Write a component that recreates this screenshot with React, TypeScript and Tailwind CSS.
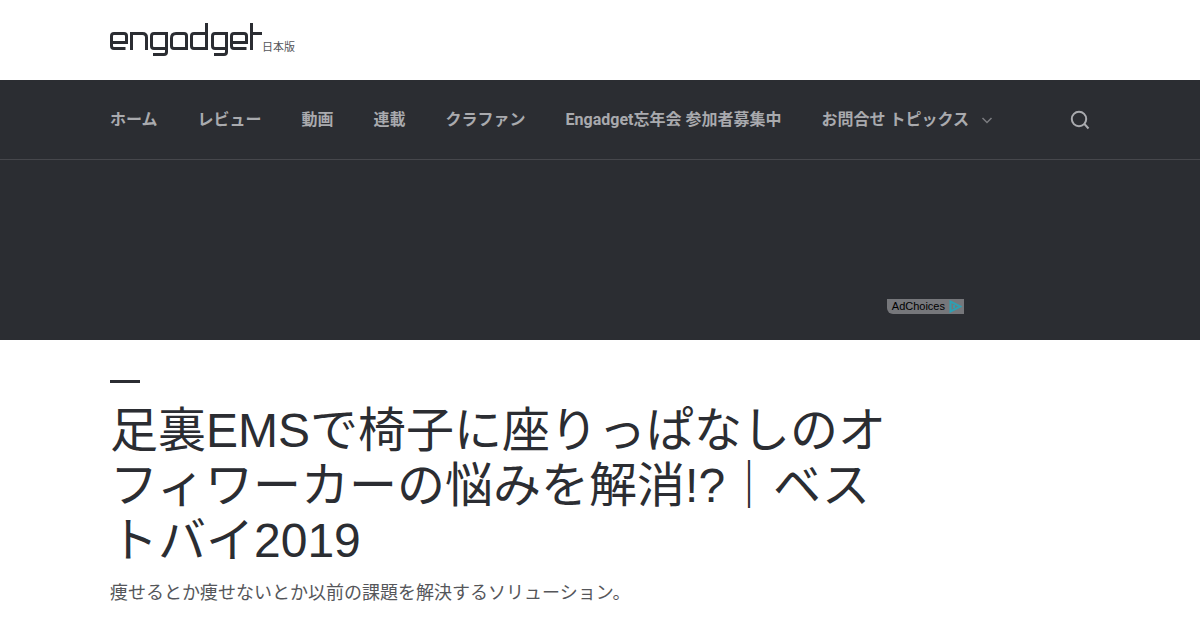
import React from "react";

const links = ["ホーム", "レビュー", "動画", "連載", "クラファン", "Engadget忘年会 参加者募集中"];

function Logo() {
  return (
    <svg viewBox="0 0 152 33" className="h-[33px] w-[152px]" fill="none" stroke="#2b2d32" strokeWidth="3" role="img" aria-label="engadget">
      <path d="M15.500 25.500H4Q1.500 25.500 1.500 23V13Q1.500 10.500 4 10.500H14Q16.500 10.500 16.500 13V19.500H1.500" />
      <path d="M21.500 27V10.500H32.500Q36.500 10.500 36.500 14.500V27" />
      <path d="M56.500 25.500H44Q41.500 25.500 41.500 23V13Q41.500 10.500 44 10.500H56.500V29Q56.500 31.500 54 31.500H43" />
      <path d="M76.500 27V13Q76.500 10.500 74 10.500H66Q61.500 10.500 61.500 15V23Q61.500 25.500 64 25.500H76.500" />
      <path d="M96.500 0V25.500H84Q81.500 25.500 81.500 23V13Q81.500 10.500 84 10.500H96.500" />
      <path d="M116.500 25.500H105Q102.500 25.500 102.500 23V13Q102.500 10.500 105 10.500H116.500V29Q116.500 31.500 114 31.500H104" />
      <path d="M136.500 25.500H124Q121.500 25.500 121.500 23V13Q121.500 10.500 124 10.500H134Q136.500 10.500 136.500 13V19.500H121.500" />
      <path d="M141.500 0V27M141.500 10.500H152" />
    </svg>
  );
}

export default function App() {
  return (
    <div className="min-h-screen bg-white font-['Liberation_Sans','Noto_Sans_CJK_JP',sans-serif] text-[#2b2d32]">
      <header>
        <div className="h-20 px-[110px] pt-[23px]">
          <a href="#" className="flex items-start">
            <Logo />
            <span className="pt-4 text-[11px] leading-4 text-[#55565a]">日本版</span>
          </a>
        </div>
        <nav className="flex h-20 items-center border-b border-[#46474c] bg-[#2b2d32] px-[110px] font-['Roboto','Noto_Sans_CJK_JP',sans-serif] text-base font-bold text-[#a9aaae]">
          <ul className="flex items-center gap-10 whitespace-nowrap">
            {links.map((label) => (
              <li key={label}><a href="#">{label}</a></li>
            ))}
            <li>
              <button type="button" className="flex items-center gap-3">
                お問合せ トピックス
                <svg viewBox="0 0 12 8" className="h-2 w-3" fill="none" stroke="#7b7c80" strokeWidth="1.5" aria-hidden="true">
                  <path d="M1.500 2l4.500 4.500 4.500-4.500" />
                </svg>
              </button>
            </li>
          </ul>
          <button type="button" aria-label="検索" className="ml-auto">
            <svg viewBox="0 0 20 20" className="size-5" fill="none" stroke="#a9aaae" strokeWidth="2" aria-hidden="true">
              <circle cx="9" cy="9" r="7.200" />
              <path d="M14 13.500l4.500 5" />
            </svg>
          </button>
        </nav>
      </header>
      <aside className="flex h-[180px] items-start justify-end bg-[#2b2d32] pr-[236px] pt-[139px]">
        <a href="#" className="flex h-[15px] items-center gap-1 rounded-bl-md bg-[#76777b] pl-[5px] pr-0.5 text-[11px] leading-[15px] text-black">
          AdChoices
          <svg viewBox="0 0 13 13" className="size-[13px]" fill="none" stroke="#2f9fb2" strokeWidth="2" aria-hidden="true">
            <path d="M1.500 1.500v10l10-5zM5 5v3" />
          </svg>
        </a>
      </aside>
      <main className="px-[110px] pt-10">
        <div className="h-[3px] w-[30px] bg-[#2b2d32]" />
        <h1 className="mt-5 max-w-[800px] text-[48px] leading-[55px]">足裏EMSで椅子に座りっぱなしのオフィワーカーの悩みを解消!?｜ベストバイ2019</h1>
        <p className="mt-[11px] text-lg text-[#55565a]">痩せるとか痩せないとか以前の課題を解決するソリューション。</p>
      </main>
    </div>
  );
}
